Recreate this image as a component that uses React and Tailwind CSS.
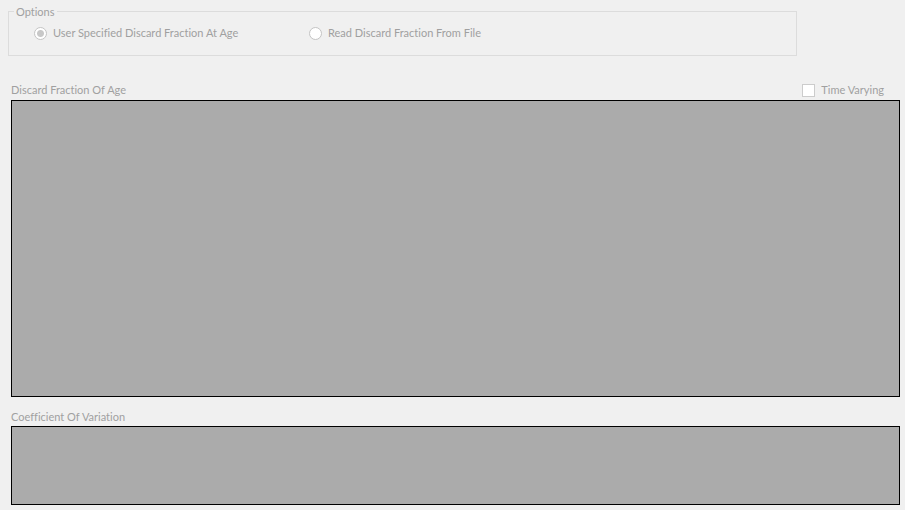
const radioClass =
  "m-0 h-[13px] w-[13px] shrink-0 appearance-none rounded-full border border-[#c4c4c4] bg-white checked:bg-[radial-gradient(circle,#c8c8c8_3px,#ffffff_4px)]";

function RadioOption({ id, label, defaultChecked }) {
  return (
    <div className="flex w-[275px] items-center gap-[6px]">
      <input
        type="radio"
        id={id}
        name="discard-source"
        disabled
        defaultChecked={defaultChecked}
        className={radioClass}
      />
      <label htmlFor={id} className="whitespace-nowrap">
        {label}
      </label>
    </div>
  );
}

export default function App() {
  return (
    <main className="flex min-h-screen flex-col bg-[#f0f0f0] pt-1 pr-[5px] pb-[5px] font-[Lato,Arial,sans-serif] text-[11px] leading-4 text-[#a0a0a0] [font-variant-ligatures:none]">
      <fieldset disabled className="mr-[103px] ml-2 border border-[#dcdcdc] pb-2">
        <legend className="ml-[5px] px-[2px] leading-[15px]">Options</legend>
        <div className="flex h-7 items-center pl-[25px]">
          <RadioOption
            id="user-specified"
            label="User Specified Discard Fraction At Age"
            defaultChecked
          />
          <RadioOption id="read-from-file" label="Read Discard Fraction From File" />
        </div>
      </fieldset>

      <section className="mt-[26px] ml-[11px] flex grow flex-col">
        <div className="flex h-[18px] items-start justify-between pr-4">
          <h2 id="discard-heading">Discard Fraction Of Age</h2>
          <div className="flex items-center gap-[6px]">
            <input
              type="checkbox"
              id="time-varying"
              disabled
              className="m-0 h-[13px] w-[13px] shrink-0 appearance-none border border-[#cccccc] bg-white"
            />
            <label htmlFor="time-varying">Time Varying</label>
          </div>
        </div>
        <div
          role="region"
          aria-labelledby="discard-heading"
          className="grow border border-black bg-[#ababab]"
        />
      </section>

      <section className="mt-3 ml-[11px]">
        <h2 id="variation-heading" className="h-[17px]">
          Coefficient Of Variation
        </h2>
        <div
          role="region"
          aria-labelledby="variation-heading"
          className="h-[79px] border border-black bg-[#ababab]"
        />
      </section>
    </main>
  );
}
